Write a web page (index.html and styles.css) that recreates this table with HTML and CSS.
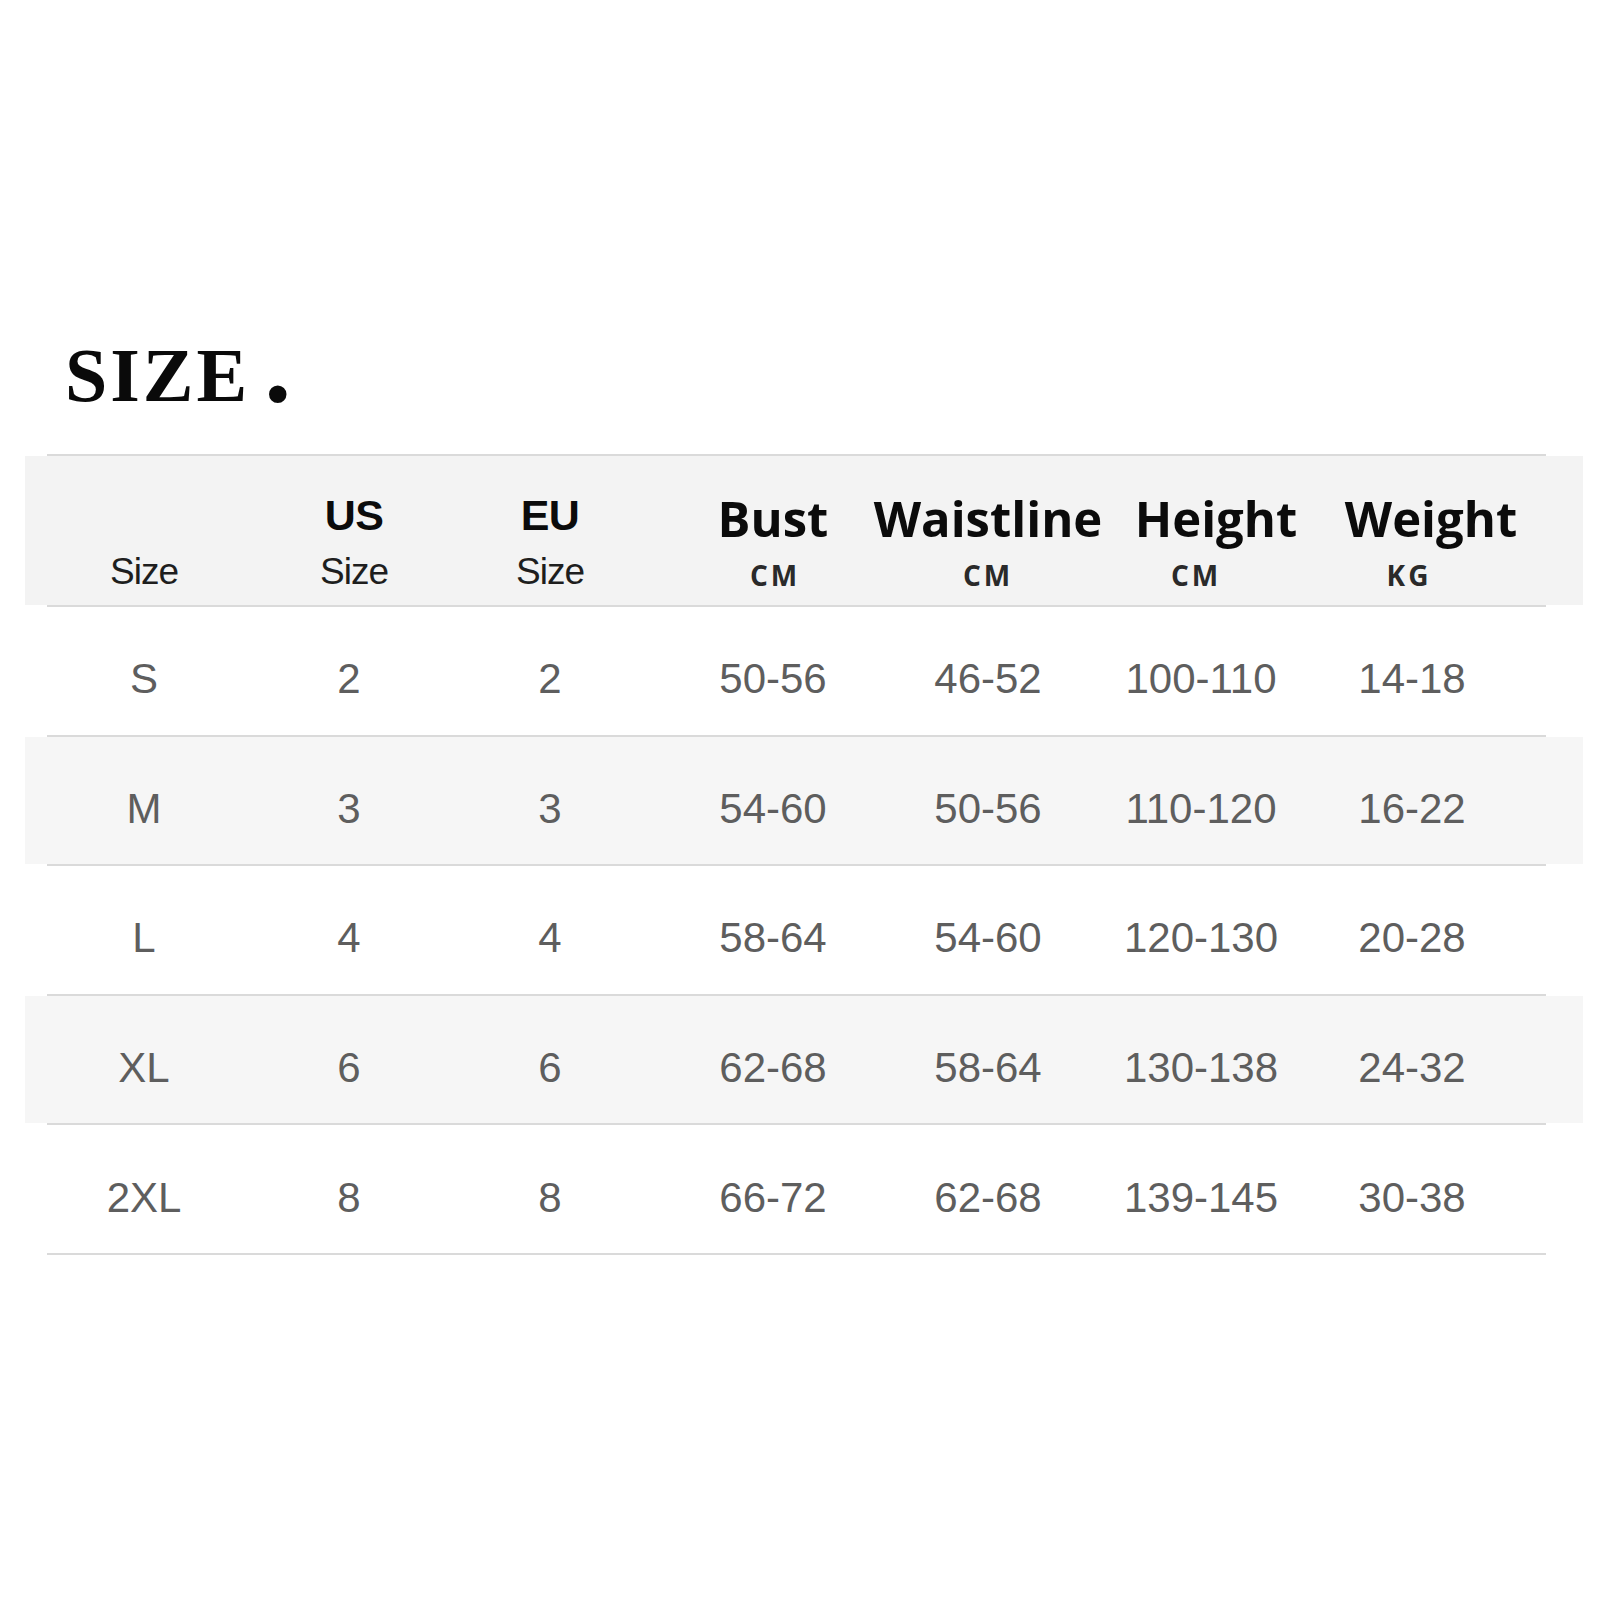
FILE: index.html
```html
<!DOCTYPE html>
<html lang="en">
<head>
<meta charset="utf-8">
<title>Size chart</title>
<link rel="stylesheet" href="styles.css">
</head>
<body>
<main class="page">
  <h1 class="title">SIZE<span class="dot">.</span></h1>

  <section class="chart">
    <div class="rule"></div>
    <div class="head">
      <div class="hcell"><div class="h-main"></div><div class="h-sub">Size</div></div>
      <div class="hcell"><div class="h-main sans sh-5">US</div><div class="h-sub sh-5">Size</div></div>
      <div class="hcell"><div class="h-main sans">EU</div><div class="h-sub">Size</div></div>
      <div class="hcell"><div class="h-main bold">Bust</div><div class="h-unit sh-2">CM</div></div>
      <div class="hcell"><div class="h-main bold">Waistline</div><div class="h-unit">CM</div></div>
      <div class="hcell"><div class="h-main bold sh-15">Height</div><div class="h-unit shl-5">CM</div></div>
      <div class="hcell"><div class="h-main bold sh-19">Weight</div><div class="h-unit shl-3">KG</div></div>
    </div>
    <div class="rule"></div>

    <div class="row">
      <div>S</div><div>2</div><div>2</div><div>50-56</div><div>46-52</div><div>100-110</div><div>14-18</div>
    </div>
    <div class="rule"></div>
    <div class="row alt">
      <div>M</div><div>3</div><div>3</div><div>54-60</div><div>50-56</div><div>110-120</div><div>16-22</div>
    </div>
    <div class="rule"></div>
    <div class="row">
      <div>L</div><div>4</div><div>4</div><div>58-64</div><div>54-60</div><div>120-130</div><div>20-28</div>
    </div>
    <div class="rule"></div>
    <div class="row alt">
      <div>XL</div><div>6</div><div>6</div><div>62-68</div><div>58-64</div><div>130-138</div><div>24-32</div>
    </div>
    <div class="rule"></div>
    <div class="row">
      <div>2XL</div><div>8</div><div>8</div><div>66-72</div><div>62-68</div><div>139-145</div><div>30-38</div>
    </div>
    <div class="rule"></div>
  </section>
</main>
</body>
</html>
```

FILE: styles.css
```css
html, body {
  margin: 0;
  padding: 0;
  background: #ffffff;
}

.page {
  width: 1600px;
  height: 1600px;
  padding-top: 334px;
  box-sizing: border-box;
}

.title {
  margin: 0 0 38px 65px;
  height: 82px;
  font-family: "Liberation Serif", "Times New Roman", serif;
  font-weight: 700;
  font-size: 76px;
  line-height: 82px;
  color: #0a0a0a;
  letter-spacing: 3px;
}

.dot {
  font-size: 108px;
  line-height: 0;
  margin-left: 14px;
}

.chart {
  display: flex;
  flex-direction: column;
}

.rule {
  height: 2px;
  margin-left: 47px;
  width: 1499px;
  background: #dadada;
}

.head,
.row {
  display: grid;
  grid-template-columns: 238px 172px 230px 216px 214px 212px 210px 1fr;
  margin-left: 25px;
  width: 1558px;
}

.head {
  height: 149px;
  background: #f3f3f3;
}

.hcell {
  display: flex;
  flex-direction: column;
  align-items: center;
  padding-top: 38px;
}

.h-main {
  height: 48px;
  color: #0b0b0b;
  white-space: nowrap;
}

.h-main.sans {
  font-family: "Liberation Sans", Arial, sans-serif;
  font-weight: 700;
  font-size: 43px;
  line-height: 43px;
  height: 43px;
  letter-spacing: -0.5px;
}

.hcell:first-child .h-main {
  height: 43px;
}

.h-main.bold {
  font-family: "Open Sans", "Noto Sans", sans-serif;
  font-weight: 700;
  font-size: 49px;
  line-height: 48px;
  letter-spacing: 0;
}

.h-sub {
  margin-top: 16px;
  font-family: "Liberation Sans", Arial, sans-serif;
  font-size: 37px;
  line-height: 37px;
  color: #1e1e1e;
  letter-spacing: -1px;
}

.h-unit {
  margin-top: 19px;
  font-family: "Open Sans", "Noto Sans", sans-serif;
  font-weight: 700;
  font-size: 28px;
  line-height: 28px;
  letter-spacing: 3px;
  color: #2a2a2a;
}

.sh-2 { margin-left: 4px; }
.sh-5 { margin-left: 10px; }
.sh-15 { margin-left: 30px; }
.sh-19 { margin-left: 38px; }
.shl-3 { margin-right: 6px; }
.shl-5 { margin-right: 10px; }

.row {
  height: 127.6px;
  box-sizing: border-box;
  padding-top: 17px;
  align-items: center;
  background: #ffffff;
}

.row.alt {
  background: #f6f6f6;
}

.row > div {
  text-align: center;
  font-family: "Liberation Sans", Arial, sans-serif;
  font-size: 42px;
  line-height: 48px;
  color: #5e5e5e;
  white-space: nowrap;
}
```
